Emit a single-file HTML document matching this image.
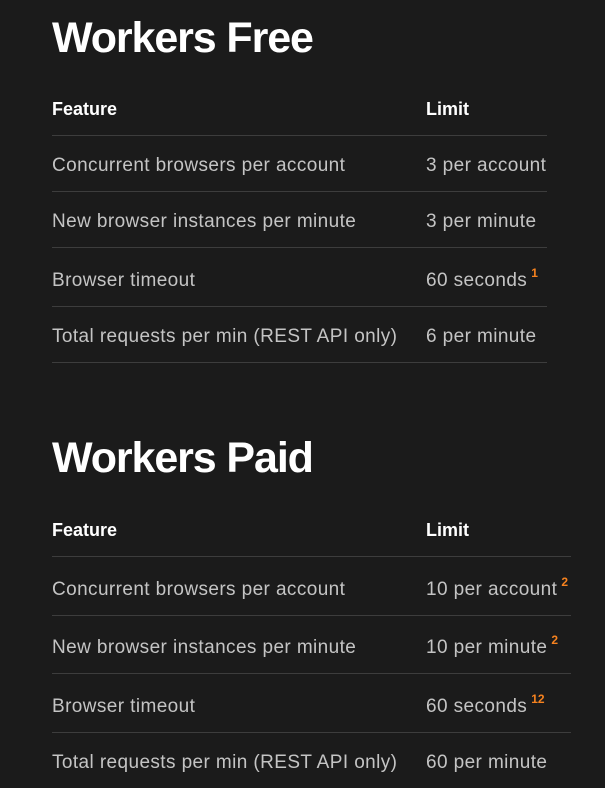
<!DOCTYPE html>
<html><head><style>
html,body{margin:0;padding:0;background:#1b1b1b;width:605px;height:788px;overflow:hidden;font-family:"Liberation Sans",sans-serif}
.a{position:absolute;white-space:nowrap;line-height:1}
h1{position:absolute;margin:0;left:52px;font-size:43px;font-weight:bold;color:#fff;line-height:1;letter-spacing:-1.1px}
.h{font-size:18px;font-weight:bold;color:#fff}
.t{font-size:19px;color:#c4c4c4;letter-spacing:0.4px}
.l{position:absolute;left:52px;height:1px;background:#3d3d3d}
sup{color:#f6821f;font-size:12px;font-weight:bold;vertical-align:0;position:relative;top:-9px;margin-left:4px;letter-spacing:0}
</style></head><body>
<h1 style="top:17px">Workers Free</h1>
<div class="a h" style="left:52px;top:100px">Feature</div><div class="a h" style="left:426px;top:100px">Limit</div>
<div class="l" style="top:135px;width:495px"></div>
<div class="a t" style="left:52px;top:156px">Concurrent browsers per account</div><div class="a t" style="left:426px;top:156px">3 per account</div>
<div class="l" style="top:191px;width:495px"></div>
<div class="a t" style="left:52px;top:212px">New browser instances per minute</div><div class="a t" style="left:426px;top:212px">3 per minute</div>
<div class="l" style="top:247px;width:495px"></div>
<div class="a t" style="left:52px;top:271px">Browser timeout</div><div class="a t" style="left:426px;top:271px">60 seconds<sup>1</sup></div>
<div class="l" style="top:306px;width:495px"></div>
<div class="a t" style="left:52px;top:327px">Total requests per min (REST API only)</div><div class="a t" style="left:426px;top:327px">6 per minute</div>
<div class="l" style="top:362px;width:495px"></div>

<h1 style="top:437px">Workers Paid</h1>
<div class="a h" style="left:52px;top:521px">Feature</div><div class="a h" style="left:426px;top:521px">Limit</div>
<div class="l" style="top:556px;width:519px"></div>
<div class="a t" style="left:52px;top:580px">Concurrent browsers per account</div><div class="a t" style="left:426px;top:580px">10 per account<sup>2</sup></div>
<div class="l" style="top:615px;width:519px"></div>
<div class="a t" style="left:52px;top:638px">New browser instances per minute</div><div class="a t" style="left:426px;top:638px">10 per minute<sup>2</sup></div>
<div class="l" style="top:673px;width:519px"></div>
<div class="a t" style="left:52px;top:697px">Browser timeout</div><div class="a t" style="left:426px;top:697px">60 seconds<sup>12</sup></div>
<div class="l" style="top:732px;width:519px"></div>
<div class="a t" style="left:52px;top:753px">Total requests per min (REST API only)</div><div class="a t" style="left:426px;top:753px">60 per minute</div>
</body></html>
